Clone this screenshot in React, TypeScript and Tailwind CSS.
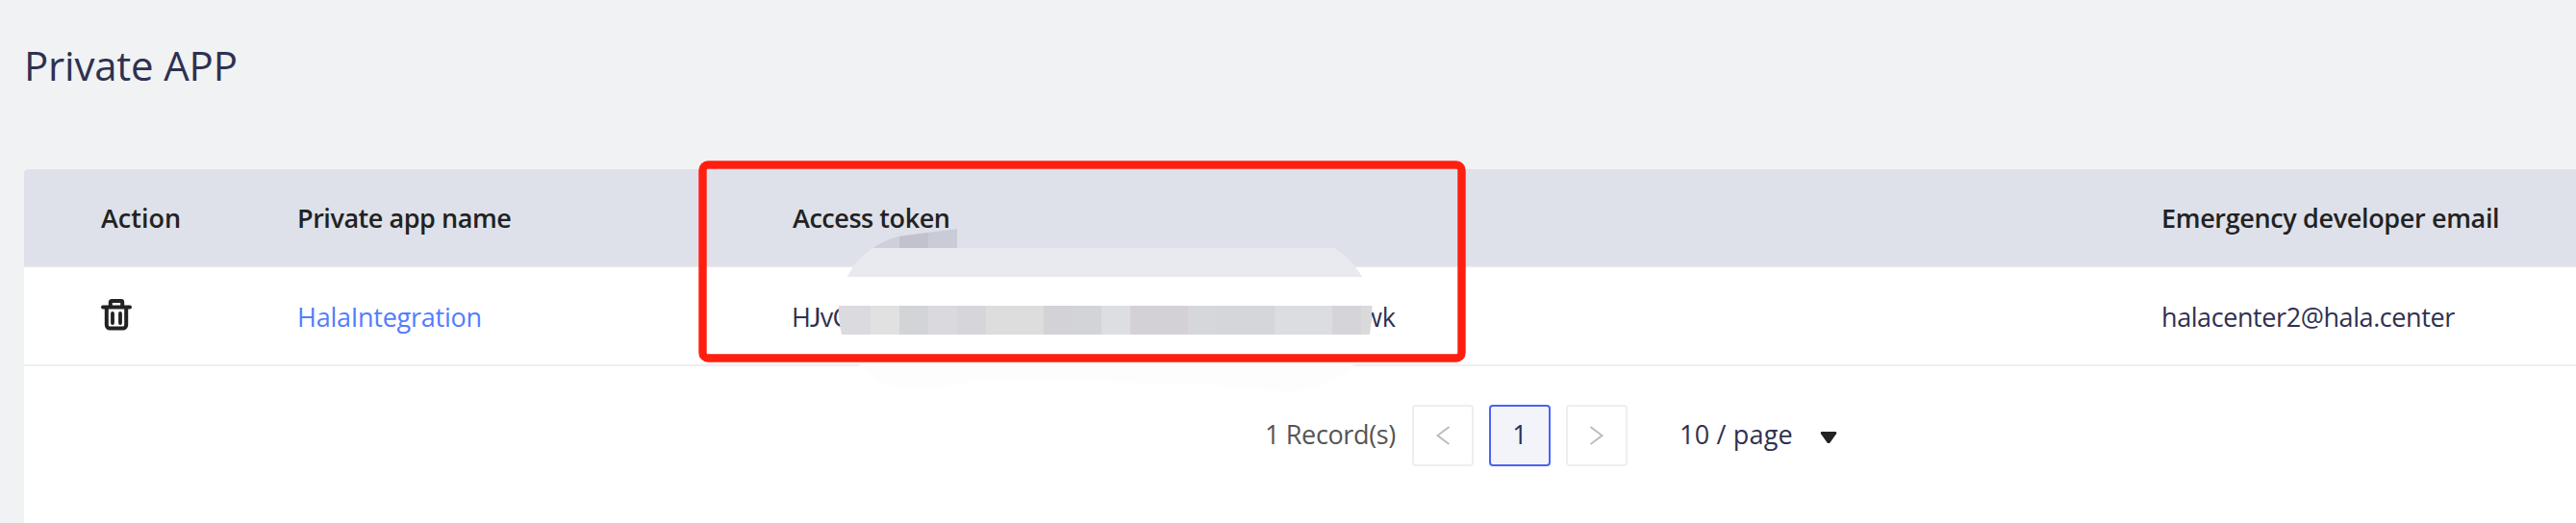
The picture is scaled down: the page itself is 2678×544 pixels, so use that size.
import type { ReactNode } from "react";

const grid = "grid grid-cols-[205px_514px_1423px_1fr] pl-20";

const blocks: [number, number, string][] = [
  [871, 34, "#dbdade"],
  [905, 30, "#e1e1e2"],
  [935, 30, "#d3d4d8"],
  [965, 30, "#dad9de"],
  [995, 30, "#d6d5da"],
  [1025, 60, "#dddddd"],
  [1085, 30, "#d3d3d7"],
  [1115, 30, "#d3d4d9"],
  [1145, 30, "#dddee2"],
  [1175, 60, "#d3d1d6"],
  [1235, 30, "#d6d7da"],
  [1265, 60, "#d5d6d9"],
  [1325, 60, "#dcdde0"],
  [1385, 30, "#d5d4d9"],
  [1415, 12, "#dadadb"],
];

function Annotations() {
  return (
    <svg className="pointer-events-none absolute left-0 top-0" width="2678" height="544" viewBox="0 0 2678 544">
      <defs>
        <clipPath id="cap">
          <path d="M907 258.5C918 251 925 248 937 245.5L995 238V258.5Z" />
        </clipPath>
        <clipPath id="strip">
          <path d="M872 318H1426.5Q1426.5 332 1424 348H875Q871 333 872 318Z" />
        </clipPath>
      </defs>
      <g clipPath="url(#cap)">
        <rect x="900" y="235" width="35" height="23" fill="#cdd0d9" />
        <rect x="935" y="235" width="30" height="23" fill="#c2c2cc" />
        <rect x="965" y="235" width="30" height="23" fill="#c9ccd6" />
      </g>
      <path d="M907 258H1387Q1403 267 1416.500 288H880.500Q890 270 907 258Z" fill="#e9eaef" />
      <g clipPath="url(#strip)">
        {blocks.map(([x, w, fill]) => (
          <rect key={x} x={x} y="318" width={w} height="30" fill={fill} />
        ))}
      </g>
      <path
        d="M891 378H1409C1390 398 1364 407 1340 407C1310 407 1300 402 1250 400C1190 400 1130 395 1050 394C1000 396 980 405 950 405C925 405 908 394 891 378Z"
        fill="#fdfdfd"
      />
      <rect x="730.5" y="171.5" width="789" height="201" rx="5.500" fill="none" stroke="#ff1f10" strokeWidth="8.400" />
    </svg>
  );
}

function Trash() {
  return (
    <svg width="32" height="33" viewBox="0 0 32 33" fill="none" stroke="#222" strokeLinecap="round" strokeLinejoin="round">
      <path d="M2 8.500H30" strokeWidth="4" />
      <path d="M9.800 8V3.200a1.200 1.200 0 0 1 1.200-1.200H21a1.200 1.200 0 0 1 1.200 1.200V8" strokeWidth="4" />
      <path d="M5.800 9V27a3.500 3.500 0 0 0 3.500 3.500H22.700a3.500 3.500 0 0 0 3.500-3.500V9" strokeWidth="4" />
      <path d="M12 15V25M20 15V25" strokeWidth="3.800" />
    </svg>
  );
}

function PageButton({ active, children }: { active?: boolean; children: ReactNode }) {
  return (
    <button
      className={
        active
          ? "flex size-16 items-center justify-center rounded-[4px] border-2 border-[#4a63f5] bg-[#f3f4f9] pb-px"
          : "flex size-16 items-center justify-center rounded-[4px] border-2 border-[#eeeeee] bg-white"
      }
    >
      {children}
    </button>
  );
}

export default function App() {
  return (
    <div className="relative h-[544px] w-[2678px] overflow-hidden bg-[#f0f2f4] pl-[25px] font-['Open_Sans','Noto_Sans',sans-serif] text-[27px] text-[#2f3150]">
      <h1 className="h-44 pt-[39px] text-[42px] leading-[57px] tracking-[-0.2px]">Private APP</h1>

      <div className="h-[368px] rounded-tl-[4px] bg-white">
        <div className={`${grid} h-[102px] items-center rounded-tl-[4px] border-b-2 border-[#e6e6e8] bg-[#dee1e9] pt-[2px] font-semibold text-[#222]`}>
          <span>Action</span>
          <span className="-ml-px tracking-[-0.45px]">Private app name</span>
          <span className="tracking-[-0.45px]">Access token</span>
          <span className="tracking-[-0.35px]">Emergency developer email</span>
        </div>

        <div className={`${grid} h-[103px] items-center border-b-2 border-[#eeeeee] pt-[3px]`}>
          <span className="-mt-[5px]">
            <Trash />
          </span>
          <a className="-ml-px tracking-[-0.25px] text-[#527dfc]">HalaIntegration</a>
          <span className="-ml-px flex w-[628px] items-baseline justify-between">
            <span className="tracking-[-0.8px]">
              H<span className="font-['Lato'] leading-none">J</span>vC
            </span>
            <span>wk</span>
          </span>
          <span className="tracking-[-0.42px]">halacenter2@hala.center</span>
        </div>

        <div className="mt-10 flex h-16 items-center pl-[1290px]">
          <span className="w-[153px] pb-px tracking-[-0.35px] text-[#555]">1 Record(s)</span>
          <div className="flex gap-4">
            <PageButton>
              <svg width="14" height="20" viewBox="0 0 14 20" fill="none" stroke="#bdbdbd" strokeWidth="2">
                <path d="M13.500 1L1.500 10L13.500 19" />
              </svg>
            </PageButton>
            <PageButton active>1</PageButton>
            <PageButton>
              <svg width="14" height="20" viewBox="0 0 14 20" fill="none" stroke="#bdbdbd" strokeWidth="2">
                <path d="M0.500 1L12.500 10L0.500 19" />
              </svg>
            </PageButton>
          </div>
          <span className="ml-[54px] w-[146px] pb-px tracking-[0.2px]">10 / page</span>
          <svg className="mt-[3px]" width="18" height="14" viewBox="0 0 18 14" fill="#222">
            <path d="M2 1H16Q18 1.300 17 3.200L10.600 12.200Q9 14 7.400 12.200L1 3.200Q0 1.300 2 1Z" />
          </svg>
        </div>
      </div>

      <Annotations />
    </div>
  );
}
